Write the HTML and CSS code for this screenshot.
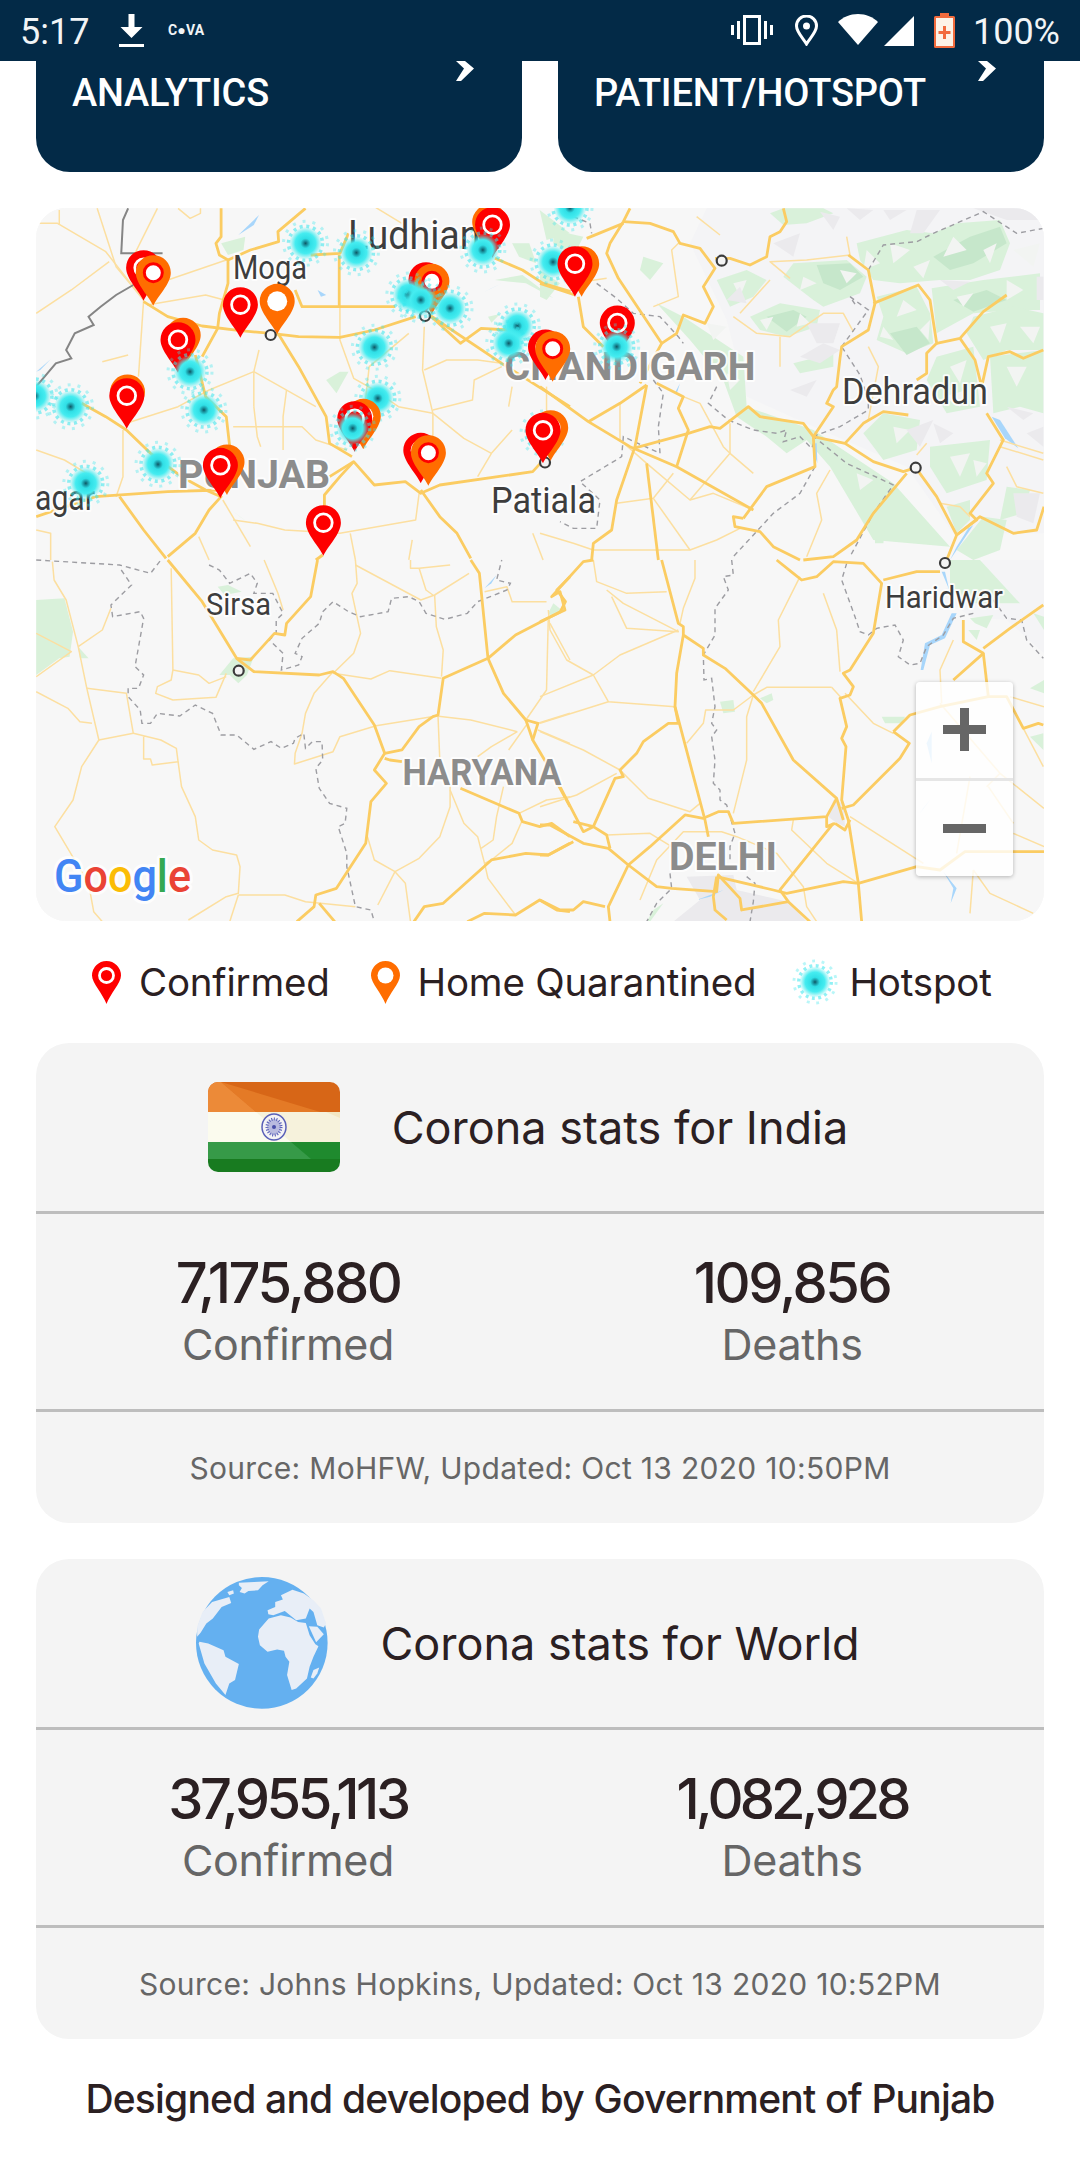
FILE: index.html
```html
<!DOCTYPE html>
<html lang="en">
<head>
<meta charset="utf-8">
<title>Corona stats</title>
<link rel="stylesheet" href="styles.css">
</head>
<body>
<div class="page">
  <header class="status">
    <div class="status-left">
      <span class="clock">5:17</span>
      <svg class="ic-dl" viewBox="0 0 25 33"><path d="M9.500 0h6v13h8L12.500 24 1.500 13h8z"/><rect y="30" width="25" height="3"/></svg>
      <span class="cova">C●VA</span>
    </div>
    <div class="status-right">
      <svg class="ic-vib" viewBox="0 0 42 30"><path class="ln" d="M13.500 1.500h15v27h-15z"/><rect x="0" y="10" width="3" height="10"/><rect x="6" y="6" width="3" height="18"/><rect x="33" y="6" width="3" height="18"/><rect x="39" y="10" width="3" height="10"/></svg>
      <svg class="ic-loc" viewBox="0 0 23 31"><path class="ln" d="M11.500 29 C8 23 1.500 17 1.500 11 A10 10 0 0 1 21.500 11 C21.500 17 15 23 11.500 29Z"/><circle cx="11.500" cy="11" r="3.500"/></svg>
      <svg class="ic-wifi" viewBox="0 0 40 31"><path d="M20 31 0 8 C5 3 12 0 20 0 S35 3 40 8Z"/></svg>
      <svg class="ic-sig" viewBox="0 0 30 30"><path d="M0 30 30 0V30Z"/></svg>
      <svg class="ic-bat" viewBox="0 0 21 35"><path class="bat-o" d="M6 0h9v3h4.500q1.500 0 1.500 1.500v29q0 1.500-1.500 1.500h-18Q0 35 0 33.500v-29Q0 3 1.500 3H6z"/><rect class="bat-f" x="2" y="5" width="17" height="28"/><path class="bat-p" d="M9 13h3v5h4.500v3H12v5H9v-5H4.500v-3H9z"/></svg>
      <span class="pct">100%</span>
    </div>
  </header>

  <section class="tiles">
    <a class="tile"><span class="tile-text">ANALYTICS</span><svg class="chev" viewBox="0 0 18 20"><path d="M0 0h9l9 7.500L5 20H0l8-12.500z"/></svg></a>
    <a class="tile"><span class="tile-text">PATIENT/HOTSPOT</span><svg class="chev" viewBox="0 0 18 20"><path d="M0 0h9l9 7.500L5 20H0l8-12.500z"/></svg></a>
  </section>

  <section class="map">
    <svg class="map-svg" viewBox="36 208 1008 713" xmlns="http://www.w3.org/2000/svg">
      <defs>
        <radialGradient id="hg">
          <stop offset="0" stop-color="#0f5560"/>
          <stop offset=".1" stop-color="#178794"/>
          <stop offset=".3" stop-color="#30dfe6"/>
          <stop offset=".62" stop-color="#45ecf0"/>
          <stop offset="1" stop-color="#4deef0" stop-opacity="0"/>
        </radialGradient>
        <g id="hot">
          <circle class="h-d2" r="22"/>
          <circle class="h-d1" r="17"/>
          <circle r="16.500" fill="url(#hg)"/>
        </g>
        <g id="pr">
          <path class="p-red" d="M0 0C-4-9-17.500-22-17.500-33A17.500 17.500 0 0 1 17.500-33C17.500-22 4-9 0 0Z"/>
          <circle class="p-ring" cy="-33" r="8.800"/>
        </g>
        <g id="po">
          <path class="p-or" d="M0 0C-4-9-17.500-22-17.500-33A17.500 17.500 0 0 1 17.500-33C17.500-22 4-9 0 0Z"/>
          <circle class="p-hole" cy="-33" r="10"/>
        </g>
        <g id="pob">
          <path class="p-or" d="M0 0C-4-9-17.500-22-17.500-33A17.500 17.500 0 0 1 17.500-33C17.500-22 4-9 0 0Z"/>
          <circle class="p-holer" cy="-33" r="9"/>
        </g>
        <g id="cd"><circle class="city" r="5"/></g>
      </defs>

      <rect class="bg" x="36" y="208" width="1008" height="713"/>

      <!-- terrain NE -->
      <g transform="translate(540 200) scale(.33333)">
        <path class="t-l" d="M500 25H1512V1000H1240L1100 800 820 680 620 590 560 360 450 130Z"/>
        <g class="t-g">
          <path d="M350 310 430 350 610 470 620 620 820 690 1060 850 1230 1040 1000 1020 870 800 800 720 740 760 680 710 590 650 550 540 450 420Z"/>
          <path d="M690 40 730 25H850L880 40 800 70 730 75Z"/>
          <path d="M950 130 1100 90 1180 100 1250 70 1380 60 1410 130 1380 210 1290 240 1200 240 1080 250 1000 240 960 180Z"/>
          <path d="M1010 290 1130 260 1170 340 1180 430 1100 460 1010 420 1030 350Z"/>
          <path d="M760 190 920 180 980 230 960 280 850 320 820 300 730 230Z"/>
          <path d="M630 350 720 310 840 330 830 380 740 410 660 390Z"/>
          <path d="M530 240 620 210 680 240 640 290 570 320Z"/>
          <path d="M1175 265 1330 240 1500 220V330L1420 330 1300 340 1190 400Z"/>
          <path d="M1300 350 1420 320 1510 340V450H1400L1330 480 1280 400Z"/>
          <path d="M1350 470 1510 450V640L1440 620 1360 640Z"/>
          <path d="M1190 470 1300 440 1320 620 1220 640 1160 540Z"/>
          <path d="M1030 640 1140 660 1130 750 1030 780 970 700Z"/>
          <path d="M1170 740 1350 720 1340 840 1220 880 1170 800Z"/>
          <path d="M1400 860 1470 870 1450 940 1380 960Z"/>
          <path d="M1220 920 1290 900V960L1250 1000Z"/>
          <path d="M1005 995 1035 990 1030 1030H1005Z"/>
          <path d="M760 490 880 460V500L780 520Z"/>
          <path d="M1330 950 1400 960 1380 1050 1300 1080 1250 1050Z"/>
          <path d="M310 170 370 190 330 240 300 210Z"/>
          <path d="M0 210 60 250 20 300 0 290Z"/>
          <path d="M40 90 130 110 100 170 40 130Z"/>
        </g>
        <g class="t-d">
          <path d="M1180 170 1290 110 1380 80 1400 130 1300 190 1230 210Z"/>
          <path d="M1050 400 1130 380 1170 430 1100 465Z"/>
          <path d="M830 195 930 190 970 230 900 270 850 250Z"/>
          <path d="M1240 300 1340 270 1400 300 1300 335Z"/>
          <path d="M680 350 760 330 800 350 740 395Z"/>
        </g>
        <g class="t-w">
          <path d="M1050 130 1110 150 1060 190Z"/><path d="M1240 110 1280 150 1210 170Z"/><path d="M1330 150 1370 130 1350 190Z"/><path d="M980 150 1020 190 970 210Z"/><path d="M1120 200 1170 180 1150 235Z"/><path d="M1090 300 1130 330 1070 350Z"/><path d="M1030 380 1060 420 1020 410Z"/><path d="M1140 390 1170 360 1165 420Z"/><path d="M790 230 830 250 780 270Z"/><path d="M900 210 950 220 920 250Z"/><path d="M660 360 700 350 680 390Z"/><path d="M780 340 810 370 770 380Z"/><path d="M580 250 620 240 600 290Z"/><path d="M1250 290 1300 280 1270 320Z"/><path d="M1400 240 1450 270 1400 300Z"/><path d="M1350 380 1400 370 1380 430Z"/><path d="M1440 380 1500 380 1480 430Z"/><path d="M1400 500 1460 500 1430 560Z"/><path d="M1230 500 1280 480 1260 550Z"/><path d="M1210 590 1280 570 1260 620Z"/><path d="M1060 680 1110 690 1070 730Z"/><path d="M1230 770 1290 760 1260 830Z"/><path d="M1300 780 1340 790 1310 830Z"/><path d="M500 370 560 380 520 420Z"/><path d="M950 820 1000 840 960 870Z"/><path d="M1420 150 1500 130 1480 200Z"/><path d="M560 520 600 540 570 570Z"/>
        </g>
        <g class="t-y">
          <path d="M1130 30H1200L1150 100H1110Z"/>
          <path d="M1030 30H1100L1050 60Z"/>
          <path d="M920 25 1000 30 960 60Z"/>
          <path d="M1300 25H1500V60H1400Z"/>
          <path d="M800 370H900L880 430H830Z"/>
          <path d="M780 470 850 430 900 450 840 490Z"/>
          <path d="M1180 670 1240 700 1200 730Z"/>
          <path d="M1400 620 1480 640 1450 660Z"/>
          <path d="M1490 230H1510V300H1490Z"/>
          <path d="M1460 700 1510 680V740Z"/>
          <path d="M1420 880H1500L1480 970 1430 950Z"/>
          <path d="M1100 690 1180 660 1140 740Z"/>
          <path d="M560 300 600 260 620 310Z"/>
          <path d="M700 130 780 100 760 170Z"/>
          <path d="M750 570 830 540 800 590Z"/>
          <path d="M1200 240 1290 245 1240 270Z"/>
          <path d="M840 35 900 50 880 90Z"/>
        </g>
        <g class="wat">
          <path d="M1355 650 1380 660 1435 745 1395 715Z"/>
          <path d="M405 578 420 550 412 575Z"/>
          <path d="M1300 975 1230 1080 1250 1040 1285 985Z"/>
          <path d="M820 730 830 730 832 790 822 760Z"/>
        </g>
      </g>

      <!-- greens elsewhere -->
      <g class="t-g" transform="translate(30 200) scale(.34435 .33333)">
        <path d="M1400 130 1450 130 1470 190 1420 170Z"/>
        <path d="M1350 240 1430 225 1520 295 1440 250Z"/>
        <path d="M1480 30 1568 100 1500 120Z"/>
        <path d="M555 130 625 110 620 150 575 165Z"/>
        <path d="M860 540 900 515H925L890 580Z"/>
        <path d="M585 930 610 950 630 965Z"/>
        <path d="M1330 350 1365 342 1340 368Z"/>
      </g>
      <g class="wat" transform="translate(30 200) scale(.34435 .33333)">
        <path d="M605 105 665 45 650 75Z"/>
        <path d="M835 270 860 285 845 290Z"/>
        <path d="M1320 275 1370 250 1340 265Z"/>
        <path d="M18 515 60 478 30 510Z"/>
      </g>
      <g transform="translate(30 560) scale(.34435 .33333)">
        <g class="t-g">
          <path d="M18 120 100 115 125 215 115 290 85 295 18 345Z"/>
          <path d="M140 260 170 295H145Z"/>
          <path d="M550 345 590 295 650 290 630 345 605 370 580 345Z"/>
          <path d="M545 80 575 75 615 95 565 105Z"/>
          <path d="M1505 160 1520 135 1540 155 1510 165Z"/>
        </g>
        <path class="wat" d="M1320 85 1355 45 1340 70Z"/>
      </g>
      <g transform="translate(540 560) scale(.33333)">
        <path class="t-l" d="M1330 0H1512V280L1400 180 1290 170 1200 100Z"/>
        <path class="t-y" d="M440 950 580 945 590 990 745 1025 800 1085H400L480 1020Z"/>
        <path class="t-y" d="M880 720 910 730 915 800 885 785 865 770Z"/>
        <g class="t-g">
          <path d="M540 425 580 420 585 455 550 460Z"/>
          <path d="M660 415 695 400 700 420 680 430Z"/>
          <path d="M1025 470H1095L1085 490H1035Z"/>
          <path d="M1470 385 1512 360V400Z"/>
          <path d="M1230 0H1320L1440 130 1300 130 1230 90Z"/>
          <path d="M1290 175 1360 165 1340 205 1305 190Z"/>
          <path d="M1285 210H1320L1310 240Z"/>
          <path d="M1470 530 1510 520V570Z"/>
          <path d="M1480 160 1512 170V210Z"/>
          <path d="M25 160 40 130 65 150 35 165Z"/>
          <path d="M340 1050 370 1030 330 1085H320Z"/>
        </g>
        <g class="wat">
          <path d="M1205 35 1215 35 1228 90Z"/>
          <path d="M1235 160H1250L1215 235 1170 255 1150 330 1142 330 1155 250 1205 225Z"/>
          <path d="M1210 935 1250 985 1232 1030 1240 985Z"/>
          <path d="M470 1020 550 990 510 1010Z"/>
          <path d="M1160 550 1175 515 1175 610Z"/>
          <path d="M1140 760 1170 720 1150 745Z"/>
        </g>
      </g>

      <!-- NW / Punjab roads -->
      <g transform="translate(30 200) scale(.34435 .33333)">
        <g class="r-min">
          <path d="M18 70 80 70 220 155 330 300"/><path d="M85 30V75"/><path d="M195 25 250 200 330 300"/><path d="M18 340 120 270 230 185"/><path d="M370 25 300 170"/><path d="M330 300 315 530"/><path d="M400 240 570 180"/><path d="M340 315 510 285 600 310"/><path d="M430 25 465 55 495 40V25"/>
          <path d="M650 515V620"/><path d="M650 515 520 570 430 620 280 670"/><path d="M650 515 830 620"/><path d="M665 450 650 515"/><path d="M650 620 660 710 670 740"/><path d="M745 570 735 650V750"/><path d="M590 680H790L830 720 920 750"/>
          <path d="M900 320V420L940 535 1000 570 1070 620 1170 640"/><path d="M970 640 985 500 1100 400"/><path d="M1145 380 1140 510 1170 640V720"/><path d="M1145 510 1210 480H1300L1370 490"/><path d="M1170 630 1285 600 1290 540 1370 500"/><path d="M1170 640 1260 715 1340 760 1400 690"/>
          <path d="M270 690V830L250 890"/><path d="M18 750 100 780 180 830"/><path d="M1340 760 1300 830"/><path d="M1130 880 1120 960 900 1000 740 990 660 970 590 960"/><path d="M560 900 640 1040"/><path d="M930 1000 945 1080"/><path d="M1110 1020 1100 1080"/>
          <path d="M1500 560V650"/><path d="M1400 560 1390 620"/><path d="M210 485 285 465"/><path d="M18 990 60 1000V1080"/><path d="M490 1010 520 1080"/><path d="M1000 20 1080 70"/><path d="M1460 1000 1490 1080"/>
        </g>
        <g class="r-maj">
          <path d="M330 305 400 350 500 378 610 392 700 400 780 410 900 412 1000 390 1120 350"/>
          <path d="M720 400 780 500 860 650 870 730 935 770"/>
          <path d="M555 25V110L540 130 550 165 575 180V250L550 340 545 385 500 470"/>
          <path d="M800 25 720 95 722 125 640 150 575 180"/>
          <path d="M770 270 790 320H1060"/>
          <path d="M898 165V320"/><path d="M815 165 900 160 925 100"/>
          <path d="M150 610 220 650 280 690 350 760 440 830 510 870 555 890 520 930 480 1000 400 1070"/>
          <path d="M18 950 190 890 400 875 555 870"/>
          <path d="M1350 175 1430 210 1490 250 1570 275"/>
          <path d="M1160 345 1250 430 1310 385 1390 390"/>
          <path d="M1160 345 1370 490 1568 620"/>
          <path d="M870 830 940 785 1000 855 1090 845 1135 880 1190 855 1460 815 1500 770"/>
          <path d="M940 785 900 830 855 885V920"/>
          <path d="M1135 870 1190 950 1240 1000 1280 1075"/>
          <path d="M260 890 330 990 395 1075"/>
          <path d="M480 465 510 590 570 650 580 740"/>
          <path d="M850 1065 830 1080"/>
        </g>
        <path class="r-bord" d="M285 25 270 60 265 160H385M300 255 250 285 205 320 170 350 185 375 130 400 105 450 120 475 75 490 18 560"/>
      </g>

      <!-- NE roads -->
      <g transform="translate(540 200) scale(.33333)">
        <g class="r-min">
          <path d="M470 50 540 105"/><path d="M920 110 930 165 800 180 690 185 750 235"/><path d="M600 340 690 240"/><path d="M340 320 415 290 395 150 420 125"/><path d="M200 235 100 250"/>
          <path d="M580 350 650 400 750 410 850 340H910L940 395"/><path d="M720 410V500"/><path d="M240 610V720L320 790 450 900 520 880 640 930"/><path d="M640 820 570 760 450 900"/><path d="M570 760V670"/><path d="M430 590 480 610 550 740 570 760"/><path d="M400 820 340 895 230 910"/><path d="M340 895 450 1050"/><path d="M0 1000 100 1030 160 1050H450L530 1020 600 985"/>
          <path d="M870 810 830 880 845 960 800 1070"/><path d="M1130 765 1160 730"/><path d="M985 660 1015 500 985 440"/><path d="M1135 255 1170 300"/><path d="M1200 910 1260 920 1290 950"/>
          <path d="M1380 740 1510 780"/><path d="M1400 800 1430 860 1510 880"/><path d="M1380 720 1510 760"/>
        </g>
        <path class="r-dash" d="M100 50 150 70 155 100M170 250 230 295 280 340 360 350 415 410 430 430M340 540 370 580 355 680 360 760 250 710 245 770 120 845 180 900 170 985 100 985 60 965M530 560 505 610 565 660 640 690 710 700 740 690 730 725 780 710 815 745 830 705 900 680 985 630V600L960 525 905 440M825 800 780 880 700 940 580 1070M840 725 920 790 1060 855 1000 940 930 1070M905 440 985 330 930 290 950 320M985 210 1030 135 1130 125 1180 100 1330 35 1430 100 1510 85"/>
        <g class="r-maj">
          <path d="M270 25 250 65 210 130 200 160 235 235 365 430 300 550"/>
          <path d="M250 65 330 70 400 95 420 130 480 145 525 205 490 260 520 320 495 370 430 345 410 400 365 430"/>
          <path d="M140 115 250 70"/>
          <path d="M525 175H570L630 195 680 170 690 110 720 95 740 65 730 25"/>
          <path d="M115 290 130 380 190 440"/>
          <path d="M0 250 105 285"/>
          <path d="M0 560 145 665 270 740 410 800 640 930"/>
          <path d="M145 665 240 610 320 555"/>
          <path d="M320 555 285 740 230 900 215 990 160 1030 155 1080"/>
          <path d="M280 745 445 700 510 680 540 685 625 620 660 650 790 670 820 710 825 800 680 860 610 955"/>
          <path d="M350 550 430 590 415 625 445 690 410 800"/>
          <path d="M320 790 355 1080"/>
          <path d="M820 710 880 620 860 610 880 570 890 560 900 475 905 440 985 390 1005 310 985 210 925 165"/>
          <path d="M820 710 915 730 1000 785 1090 815 1127 803"/>
          <path d="M915 730 970 670 1030 635 1105 645"/>
          <path d="M1000 310 1050 290 1135 255 1170 300 1190 430 1160 460V520L1130 540"/>
          <path d="M1190 430 1260 415 1330 335 1400 285"/>
          <path d="M1260 415 1305 480 1325 560 1345 470 1410 455 1450 475 1510 450"/>
          <path d="M1340 640 1390 720 1350 800 1340 820 1360 850 1290 940 1310 960 1250 1005"/>
          <path d="M1127 803 1190 890 1250 1005 1220 1080"/>
          <path d="M1100 820 1000 940 950 1020 880 1070 790 1080"/>
          <path d="M610 955 580 950 585 980 660 995 700 1040 780 1080"/>
          <path d="M1250 1005 1320 950 1420 1000 1490 990 1512 920"/>
        </g>
      </g>

      <!-- SW roads -->
      <g transform="translate(30 560) scale(.34435 .33333)">
        <g class="r-min">
          <path d="M65 5 70 60 105 120 140 260 165 385 200 540 150 620 125 720 72 800 170 970 185 1055 210 1085"/>
          <path d="M18 220 120 275 18 350"/><path d="M140 260 210 210 235 145"/><path d="M165 385 280 400 300 520 200 540"/><path d="M18 395 110 445 145 485 180 490"/>
          <path d="M300 520 380 540 425 565 430 605 355 615 350 597H330V530"/>
          <path d="M430 605 440 680 480 770 490 840 530 870 600 885 610 920 605 1000 570 1010 460 1080"/>
          <path d="M605 1005H740L800 1025 945 1040"/><path d="M605 1005 580 1085"/>
          <path d="M410 25 415 330 410 360 370 380 365 400 415 420 540 412 570 340"/><path d="M415 330 490 345 520 370 570 350"/>
          <path d="M880 335 825 400 800 460 790 520 770 580 768 612 880 575 900 530 1005 497 1180 468 1280 480 1415 515"/>
          <path d="M880 340 990 357 1045 332 1195 355"/>
          <path d="M945 0 950 70 935 100 960 220 940 280 885 335"/><path d="M945 15 1135 120 1175 105 1275 40"/><path d="M1175 105 1180 200 1200 270 1195 350"/>
          <path d="M1105 0V25H1130L1220 15"/><path d="M1130 25 1150 90 1170 105"/><path d="M1320 95 1385 80 1400 125H1500"/><path d="M680 0 720 100 735 150"/>
          <path d="M1185 470 1190 600 1220 680V740L1190 830 1130 895 1060 935 1000 900 980 830"/>
          <path d="M1060 935 1090 970 1105 1085"/><path d="M1060 935 1010 1035"/><path d="M1220 690 1260 790 1300 830 1320 910 1340 900"/><path d="M1320 910 1330 955 1410 1065"/><path d="M1375 680 1355 770 1345 840 1310 865"/>
          <path d="M1445 490 1390 570"/><path d="M1475 490 1568 460"/><path d="M1475 510 1568 550"/><path d="M1440 480 1500 390 1505 180"/><path d="M1510 190 1568 300"/><path d="M1415 515 1340 560 1300 590"/><path d="M1430 780 1400 850 1340 900"/><path d="M1420 760 1500 720 1568 710"/>
        </g>
        <path class="r-dash" d="M18 0 260 15 350 40 380 0M265 30 295 75 235 135 240 170 320 155 330 175 305 320 330 345 315 385H285V410L320 450 325 490H350L370 460 435 468 480 435 530 460 555 525H600L650 568 700 545 730 565 765 550 770 535 795 520 800 565 820 545H848L850 600 830 625 840 685 870 730 920 745 915 790 895 800 920 880V920L945 1040 990 1050 1000 1085M520 15 550 30 580 70 640 40 660 70 650 100H705L735 160 715 180V220L695 240 735 280 730 330 780 315 790 290 770 280 790 235 840 190 850 155 880 125 925 155 960 170 1040 155 1050 115 1100 110 1130 125 1150 160 1205 178 1270 160 1300 125 1385 90 1395 70 1355 60 1370 0"/>
        <g class="r-maj">
          <path d="M400 0 500 125 600 295 650 335 840 345 880 335 910 355 1000 495 1030 580 1000 630 1035 670 990 725 975 850 890 985 830 1005 825 1040 775 1085"/>
          <path d="M835 0 815 110 745 190 740 225 710 220 640 300 600 295"/>
          <path d="M1030 580 1080 570 1130 500 1170 470 1185 465 1200 355 1330 295 1410 225 1540 155 1555 125 1530 90 1568 50"/>
          <path d="M1280 0 1305 40 1330 295 1375 400 1440 480 1475 490 1460 540 1500 610 1568 740"/>
          <path d="M1440 480 1460 540"/>
          <path d="M1250 685 1420 760 1430 785 1480 800 1515 790 1568 830"/>
          <path d="M1030 595 1045 600 1080 605"/>
          <path d="M1115 1085 1145 1040 1200 1030 1340 900 1440 880 1505 885 1568 850"/>
          <path d="M1270 1085 1320 1060 1410 1065 1480 1020 1530 1050 1568 1055"/>
          <path d="M840 1030 885 1085"/>
        </g>
      </g>

      <!-- SE roads -->
      <g transform="translate(540 560) scale(.33333)">
        <g class="r-min">
          <path d="M160 0 170 65 260 100 380 95"/><path d="M215 110 260 205 415 215 250 130 200 90"/><path d="M465 0V55L430 145 420 190"/>
          <path d="M25 150 30 210 80 300 160 345 205 425 405 440"/><path d="M0 410 160 345 240 285 415 210"/><path d="M0 490 205 425"/><path d="M0 515 130 570 240 630 325 715 450 755 480 730"/><path d="M0 740 110 705 230 640"/>
          <path d="M440 550 490 490 497 450H580L640 405 680 382H875"/><path d="M640 405 620 470V600L580 760"/><path d="M640 395 720 260 715 180 780 50"/><path d="M850 100 890 210 900 335"/><path d="M915 400 1000 490 1060 520"/><path d="M875 382 905 415"/>
          <path d="M760 780 755 810 860 910 955 970"/><path d="M930 770 1150 910"/><path d="M200 825 330 820 395 860"/>
          <path d="M300 1020 350 900 430 815H545L590 830 710 880 790 980 800 1040 830 1085"/>
          <path d="M1300 930 1290 1060"/><path d="M1300 930 1350 1000 1480 1060"/><path d="M1200 430 1380 640 1512 745"/><path d="M1240 240 1200 330 1205 430"/><path d="M1450 505 1510 620"/><path d="M1410 410 1512 440"/><path d="M1420 820 1512 860"/><path d="M1345 680 1420 790"/><path d="M1290 650 1250 880"/><path d="M1380 640 1340 680"/>
        </g>
        <path class="r-dash" d="M575 0 580 45 550 50 565 90 525 145V225L490 285 492 360 515 355 525 440 515 490 530 510 515 530 525 600 520 670 540 690V720L560 735 585 820 570 860V910M920 10 905 60 945 170 960 215 985 225 1010 205 1065 195 1090 240 1075 290 1110 315 1140 310 1160 260 1210 225 1240 175 1300 160M1360 120 1400 175 1445 180 1460 240 1510 295M390 940 395 985 350 1030 320 1085M620 950 645 970 640 1025 630 1085"/>
        <g class="r-maj">
          <path d="M365 0 415 190 430 200V225L490 265V285L555 325 640 405 665 430 760 600 890 715 910 780"/>
          <path d="M430 225 410 340 405 440 495 780 505 830"/>
          <path d="M405 440 415 490H385L310 545 290 580 240 630 250 650 225 655 160 800 130 815 60 680"/>
          <path d="M0 795H30L130 850 205 865 265 915 205 1040 210 1085"/>
          <path d="M0 885 25 885 100 845"/>
          <path d="M100 785 160 800 200 825 210 865"/>
          <path d="M265 915 350 980 395 985 530 995 535 945 600 1015 605 1050 745 1025 810 1085"/>
          <path d="M265 915 330 860 435 765 490 775 535 755H565L580 790 860 770 890 715"/>
          <path d="M0 185 75 150 60 95 35 110 130 5 160 0"/>
          <path d="M710 0 760 40 785 60 830 50 880 5 970 10 1025 70 1000 220 930 330 910 340 940 380 930 405 900 415 920 500 905 535 918 560 905 720 925 780 955 970 965 1085"/>
          <path d="M1030 60 1130 35H1200"/>
          <path d="M1060 515 1110 465 1200 440 1345 410H1400L1450 505 1495 490 1510 495"/>
          <path d="M1060 515 1108 550 1080 595 940 735 905 745"/>
          <path d="M1240 360 1330 280 1270 245V180"/>
          <path d="M1330 280 1345 410"/>
          <path d="M1330 265 1410 205 1510 135"/>
          <path d="M955 970 1130 920 1200 930 1275 875H1512"/>
          <path d="M955 970 910 965 740 1000 700 990 530 950"/>
          <path d="M880 790 720 990 745 1025"/>
          <path d="M885 790 860 800V770"/><path d="M885 790 915 810 930 780"/>
          <path d="M0 1020 60 1050H100L130 1025 195 1040"/>
          <path d="M530 950 520 1010 525 1050 560 1080"/>
        </g>
      </g>

      <!-- labels -->
      <g class="lbl">
        <text class="l-city" x="348" y="249" font-size="41" textLength="153" lengthAdjust="spacingAndGlyphs">Ludhiana</text>
        <text class="l-city" x="233" y="279" font-size="33" textLength="74" lengthAdjust="spacingAndGlyphs">Moga</text>
        <text class="l-city" x="491" y="513" font-size="36" textLength="105" lengthAdjust="spacingAndGlyphs">Patiala</text>
        <text class="l-city" x="206" y="615" font-size="32" textLength="65" lengthAdjust="spacingAndGlyphs">Sirsa</text>
        <text class="l-city" x="885" y="608" font-size="32" textLength="118" lengthAdjust="spacingAndGlyphs">Haridwar</text>
        <text class="l-city" x="842" y="404" font-size="37" textLength="146" lengthAdjust="spacingAndGlyphs">Dehradun</text>
        <text class="l-city" x="35" y="510" font-size="35" textLength="60" lengthAdjust="spacingAndGlyphs">agar</text>
        <text class="l-state" x="504.500" y="380" font-size="39" textLength="251" lengthAdjust="spacingAndGlyphs">CHANDIGARH</text>
        <text class="l-state" x="178" y="488" font-size="39" textLength="152" lengthAdjust="spacingAndGlyphs">PUNJAB</text>
        <text class="l-state" x="402.500" y="785" font-size="37" textLength="159" lengthAdjust="spacingAndGlyphs">HARYANA</text>
        <text class="l-state" x="669" y="870" font-size="39" textLength="108" lengthAdjust="spacingAndGlyphs">DELHI</text>
      </g>
      <text class="glogo" x="54" y="892" font-size="46" textLength="137" lengthAdjust="spacingAndGlyphs"><tspan class="gb">G</tspan><tspan class="gr">o</tspan><tspan class="gy">o</tspan><tspan class="gb">g</tspan><tspan class="gg">l</tspan><tspan class="gr">e</tspan></text>

      <!-- city dots -->
      <use href="#cd" x="270.700" y="335"/><use href="#cd" x="425" y="316"/><use href="#cd" x="545" y="462.500"/>
      <use href="#cd" x="721.700" y="260.700"/><use href="#cd" x="915.700" y="467.700"/><use href="#cd" x="945" y="563"/><use href="#cd" x="238.700" y="670.700"/>

      <!-- hotspots below pins -->
      <use href="#hot" x="553" y="262"/><use href="#hot" x="543" y="433"/><use href="#hot" x="570" y="208"/><use href="#hot" x="377.800" y="398.300"/><use href="#hot" x="517.300" y="326"/><use href="#hot" x="508.700" y="343.300"/>

      <!-- pins -->
      <use href="#pr" x="143.600" y="300.700"/><use href="#pob" x="153.300" y="305.700"/>
      <use href="#pr" x="240.400" y="337.700"/><use href="#po" x="277.200" y="334.300"/>
      <use href="#po" x="183.200" y="368.300"/><use href="#pr" x="178" y="372.700"/>
      <use href="#po" x="127.500" y="425"/><use href="#pr" x="126.800" y="428.700"/>
      <use href="#po" x="227" y="495"/><use href="#pr" x="220.400" y="498.300"/>
      <use href="#po" x="363.300" y="449.300"/><use href="#pr" x="354.700" y="451.700"/>
      <use href="#pr" x="420.800" y="483.300"/><use href="#pob" x="428.400" y="485.700"/>
      <use href="#pr" x="323.400" y="555.700"/>
      <use href="#po" x="550.700" y="460.700"/><use href="#pr" x="543" y="463.300"/>
      <use href="#pr" x="545.500" y="380"/><use href="#pob" x="552.700" y="381.700"/>
      <use href="#po" x="489.700" y="255"/><use href="#pr" x="492.500" y="257.700"/>
      <use href="#pr" x="426" y="312.700"/><use href="#pob" x="431.900" y="314.300"/>
      <use href="#po" x="581.700" y="296.700"/><use href="#pr" x="575" y="296.700"/>
      <use href="#pr" x="617.300" y="356"/>

      <!-- hotspots above pins -->
      <use href="#hot" x="305.500" y="243.300"/><use href="#hot" x="356.400" y="252.700"/><use href="#hot" x="482.800" y="250"/>
      <use href="#hot" x="408.800" y="295"/><use href="#hot" x="420.800" y="300"/><use href="#hot" x="450" y="308.300"/>
      <use href="#hot" x="374.400" y="347.300"/><use href="#hot" x="190" y="371.700"/><use href="#hot" x="203.900" y="410"/>
      <use href="#hot" x="70.600" y="406.700"/><use href="#hot" x="35" y="396"/><use href="#hot" x="352.700" y="428.300"/>
      <use href="#hot" x="158" y="464.300"/><use href="#hot" x="85.800" y="483.300"/><use href="#hot" x="616.700" y="346.700"/>
    </svg>
    <div class="zoom">
      <button class="zoom-btn"><svg viewBox="0 0 43 43"><path d="M17 0h9v17h17v9H26v17h-9V26H0v-9h17z"/></svg></button>
      <button class="zoom-btn"><svg viewBox="0 0 43 43"><path d="M0 17h43v9H0z"/></svg></button>
    </div>
  </section>

  <section class="legend">
    <div class="leg-item">
      <svg class="leg-pin" viewBox="0 0 29 43"><path class="p-red" d="M14.500 43C11 33 0 22 0 14.500A14.500 14.500 0 0 1 29 14.500C29 22 18 33 14.500 43Z"/><circle class="p-ring" cx="14.500" cy="14.500" r="7"/></svg>
      <span>Confirmed</span>
    </div>
    <div class="leg-item">
      <svg class="leg-pin" viewBox="0 0 29 43"><path class="p-or" d="M14.500 43C11 33 0 22 0 14.500A14.500 14.500 0 0 1 29 14.500C29 22 18 33 14.500 43Z"/><circle class="p-hole" cx="14.500" cy="14.500" r="8"/></svg>
      <span>Home Quarantined</span>
    </div>
    <div class="leg-item">
      <svg class="leg-hot" viewBox="-24 -24 48 48"><use href="#hot"/></svg>
      <span>Hotspot</span>
    </div>
  </section>

  <article class="card">
    <div class="card-head">
      <svg class="flag" viewBox="0 0 132 90">
        <rect class="f-s3" width="132" height="30"/>
        <path class="f-s2" d="M13 0 132 36V30H48Z"/>
        <path class="f-s1" d="M0 0H13L48 30H0Z"/>
        <rect class="f-w1" y="30" width="132" height="30"/>
        <path class="f-w2" d="M48 30H132V60H83Z"/>
        <path class="f-w3" d="M118 30H132V36Z"/>
        <rect class="f-g2" y="60" width="132" height="17"/>
        <path class="f-g1" d="M0 60H83L103 77H0Z"/>
        <rect class="f-g3" y="77" width="132" height="13"/>
        <ellipse class="f-c" cx="66" cy="45" rx="12" ry="13"/>
        <ellipse class="f-c2" cx="66" cy="45" rx="7" ry="8"/>
        <circle class="f-c3" cx="66" cy="45" r="2"/>
      </svg>
      <h2 class="card-title">Corona stats for India</h2>
    </div>
    <div class="card-stats">
      <div class="stat"><div class="stat-num">7,175,880</div><div class="stat-lab">Confirmed</div></div>
      <div class="stat"><div class="stat-num">109,856</div><div class="stat-lab">Deaths</div></div>
    </div>
    <p class="card-src">Source: MoHFW, Updated: Oct 13 2020 10:50PM</p>
  </article>

  <article class="card card-world">
    <div class="card-head">
      <svg class="globe" viewBox="438 110 345 397" preserveAspectRatio="none">
        <ellipse class="g-sea" cx="610" cy="308" rx="172" ry="198"/>
        <g class="g-land">
          <path d="M550 127 590 125 628 123 612 135 600 150 575 152 565 160 552 155 558 143 550 135Z"/>
          <path d="M627 222 625 210 645 200 645 185 665 178 660 165 690 148 720 160 745 180 765 205 778 250 772 262 755 255 745 215 735 205 725 235 700 240 670 212 640 225Z"/>
          <path d="M603 268 628 235 660 225 685 232 705 245 725 248 735 285 750 312 758 318 745 350 735 380 728 415 700 445 688 450 676 405 682 365 672 350 668 332 650 328 625 335 605 315 600 290Z"/>
          <path d="M733 258 755 260 772 282 752 306Z"/>
          <path d="M447 305 470 310 510 330 515 350 550 372 540 420 525 430 515 465 490 430 460 370 445 310Z"/>
          <path d="M525 170 530 188 505 200 482 235 465 250 450 278 441 290 441 260 455 215 480 185Z"/>
          <path d="M738 412 745 390 760 382 755 400 745 415Z"/>
          <path d="M520 155 535 150 537 160 525 165Z"/>
        </g>
      </svg>
      <h2 class="card-title">Corona stats for World</h2>
    </div>
    <div class="card-stats">
      <div class="stat"><div class="stat-num stat-tight">37,955,113</div><div class="stat-lab">Confirmed</div></div>
      <div class="stat"><div class="stat-num stat-tighter">1,082,928</div><div class="stat-lab">Deaths</div></div>
    </div>
    <p class="card-src">Source: Johns Hopkins, Updated: Oct 13 2020 10:52PM</p>
  </article>

  <footer class="credit">Designed and developed by Government of Punjab</footer>
</div>
</body>
</html>
```
FILE: styles.css
```css
* { box-sizing: border-box; }
html, body { margin: 0; padding: 0; background: #fff; }
.page {
  width: 1080px;
  height: 2160px;
  overflow: hidden;
  font-family: "Inter", "Liberation Sans", sans-serif;
  color: #2b2022;
  background: #fff;
}

/* status bar */
.status {
  height: 61px;
  background: #032a47;
  display: flex;
  justify-content: space-between;
  align-items: flex-start;
  color: #f1f4f6;
  font-family: "Roboto", sans-serif;
  font-size: 36px;
  padding: 0 20px 0 20px;
}
.status svg { display: block; fill: #fff; }
.status .ln { fill: none; stroke: #fff; stroke-width: 3; }
.status-left { display: flex; align-items: flex-start; }
.status-right { display: flex; align-items: flex-start; }
.clock { line-height: 42px; margin-top: 11px; width: 99px; }
.pct { line-height: 42px; margin-top: 11px; margin-left: 18px; }
.ic-dl { width: 25px; height: 33px; margin-top: 14px; }
.cova { font-size: 14px; font-weight: 700; line-height: 12px; margin: 24px 0 0 24px; letter-spacing: .2px; }
.ic-vib { width: 42px; height: 30px; margin-top: 15px; }
.ic-loc { width: 23px; height: 31px; margin: 15px 0 0 22px; }
.ic-wifi { width: 40px; height: 31px; margin: 14px 0 0 20px; }
.ic-sig { width: 30px; height: 30px; margin: 16px 0 0 6px; }
.ic-bat { width: 21px; height: 35px; margin: 13px 0 0 20px; }
.status .bat-o { fill: #f26b3d; }
.status .bat-f { fill: #fdf3e7; }
.status .bat-p { fill: #f26b3d; }

/* tiles */
.tiles {
  display: grid;
  grid-template-columns: 486px 486px;
  column-gap: 36px;
  padding: 0 36px;
}
.tile {
  height: 111px;
  background: #032a47;
  border-radius: 0 0 34px 34px;
  color: #fff;
  display: flex;
  justify-content: space-between;
  align-items: flex-start;
  padding: 0 48px 0 36px;
}
.tile-text {
  font-family: "Roboto", sans-serif;
  font-weight: 500;
  font-size: 38px;
  line-height: 42px;
  margin-top: 11px;
  letter-spacing: -.2px;
}
.chev { width: 18px; height: 20px; fill: #fff; display: block; }

/* map */
.map {
  position: relative;
  margin: 36px 36px 0;
  height: 713px;
  border-radius: 30px;
  overflow: hidden;
  background: #f7f7f7;
}
.map-svg { display: block; width: 1008px; height: 713px; }
.bg { fill: #f7f7f7; }
.t-l { fill: #f4f4f6; }
.t-g path, .t-g { fill: #d9f1da; }
.t-d path { fill: #c6e7cb; }
.t-w path { fill: #f2f4f2; }
.t-y path, .t-y { fill: #ebeaed; }
.wat path, .wat { fill: #a8d6fb; }
.r-min path { fill: none; stroke: #fcdfa0; stroke-width: 1.500px; stroke-linejoin: round; vector-effect: non-scaling-stroke; }
.r-maj path { fill: none; stroke: #fbcc62; stroke-width: 2.800px; stroke-linejoin: round; vector-effect: non-scaling-stroke; }
.r-dash { fill: none; stroke: #9d9da2; stroke-width: 1.400px; stroke-dasharray: 5 4; vector-effect: non-scaling-stroke; }
.r-bord { fill: none; stroke: #858585; stroke-width: 2px; vector-effect: non-scaling-stroke; }
.lbl text { paint-order: stroke; stroke: #fff; stroke-width: 4px; stroke-opacity: .85; stroke-linejoin: round; font-family: "Roboto", sans-serif; }
.l-city { fill: #3d3d3d; }
.l-state { fill: #8c8c8c; font-weight: 700; }
.glogo { font-family: "Roboto", sans-serif; font-weight: 500; paint-order: stroke; stroke: #fff; stroke-width: 6px; stroke-opacity: .8; stroke-linejoin: round; }
.gb { fill: #4285f4; }
.gr { fill: #ea4335; }
.gy { fill: #fbbc05; }
.gg { fill: #34a853; }
.city { fill: #f4f4f4; stroke: #3b3b3b; stroke-width: 2.200px; }
.p-red { fill: #fe0000; }
.p-or { fill: #ff6d00; }
.p-ring { fill: none; stroke: #fff; stroke-width: 2.800px; }
.p-hole { fill: #fff; }
.p-holer { fill: #fff; stroke: #fe0000; stroke-width: 3px; }
.h-d1 { fill: none; stroke: #37e6ec; stroke-width: 3.500px; stroke-dasharray: 3 3.700; opacity: .55; }
.h-d2 { fill: none; stroke: #37e6ec; stroke-width: 3px; stroke-dasharray: 3 7; opacity: .35; }

.zoom {
  position: absolute;
  left: 880px;
  top: 474px;
  width: 97px;
  height: 194px;
  border-radius: 4px;
  overflow: hidden;
  box-shadow: 0 1px 4px rgba(0,0,0,.28);
  background: rgba(255,255,255,.8);
  display: flex;
  flex-direction: column;
}
.zoom-btn {
  flex: 1;
  border: 0;
  padding: 0;
  background: none;
  display: flex;
  align-items: center;
  justify-content: center;
}
.zoom-btn + .zoom-btn { border-top: 3px solid #e6e6e6; }
.zoom-btn svg { width: 43px; height: 43px; fill: #666; }

/* legend */
.legend {
  height: 122px;
  display: flex;
  align-items: center;
  padding-left: 92px;
  font-size: 38.500px;
  letter-spacing: -.2px;
}
.leg-item { display: flex; align-items: center; margin-right: 41px; }
.leg-item:nth-child(2) { margin-right: 36px; }
.leg-pin { width: 29px; height: 43px; margin: 0 18px 0 0; }
.leg-hot { width: 46px; height: 46px; margin: 0 11px 0 0; }

/* cards */
.card {
  margin: 0 36px;
  height: 480px;
  background: #f4f4f4;
  border-radius: 33px;
  display: flex;
  flex-direction: column;
}
.card-world { margin-top: 36px; }
.card-head {
  height: 168px;
  flex: none;
  display: flex;
  align-items: center;
  justify-content: center;
  column-gap: 52px;
  padding-right: 24px;
}
.flag { width: 132px; height: 90px; border-radius: 10px; display: block; }
.f-s1 { fill: #ec8a38; } .f-s2 { fill: #e47a26; } .f-s3 { fill: #d76617; }
.f-w1 { fill: #fbfbee; } .f-w2 { fill: #f6f2dc; } .f-w3 { fill: #f3e7c2; }
.f-g1 { fill: #369a48; } .f-g2 { fill: #1f8a2e; } .f-g3 { fill: #187b20; }
.f-c { fill: #f4f3f5; stroke: #5a60b8; stroke-width: 1.500px; }
.f-c2 { fill: #b9bbdf; stroke: #5a60b8; stroke-width: 3px; stroke-dasharray: 1 1.500; }
.f-c3 { fill: #484ea8; }
.globe { width: 132px; height: 132px; display: block; }
.g-sea { fill: #64b0f0; }
.g-land path { fill: #e8eef7; }
.card-title { margin: 0; font-size: 45px; font-weight: 400; white-space: nowrap; }
.card-stats {
  flex: none;
  height: 198px;
  border-top: 3px solid #bdbdbd;
  display: grid;
  grid-template-columns: 1fr 1fr;
  padding-top: 35px;
  text-align: center;
}
.stat-num { font-size: 56px; font-weight: 500; line-height: 68px; letter-spacing: -2.500px; }
.stat-tight { letter-spacing: -3.400px; }
.stat-tighter { letter-spacing: -3.900px; }
.stat-lab { font-size: 43px; line-height: 50px; margin-top: 2px; color: #666; letter-spacing: -.3px; }
.card-src {
  flex: 1;
  margin: 0;
  border-top: 3px solid #bdbdbd;
  display: flex;
  align-items: center;
  justify-content: center;
  font-size: 30px;
  color: #666;
  letter-spacing: .3px;
  white-space: nowrap;
}

/* footer */
.credit {
  margin-top: 36px;
  text-align: center;
  font-size: 39px;
  font-weight: 500;
  line-height: 47px;
  letter-spacing: -.8px;
  white-space: nowrap;
}
```
